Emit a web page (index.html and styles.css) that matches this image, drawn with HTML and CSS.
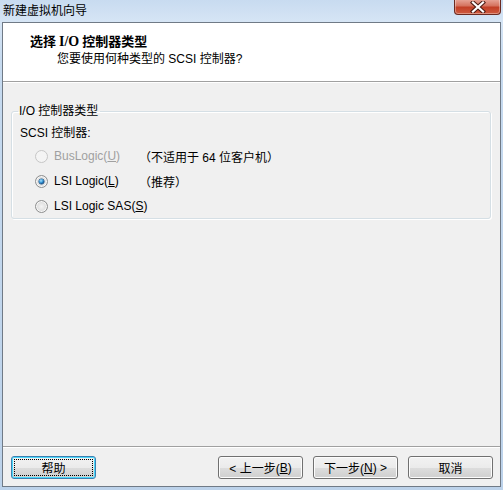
FILE: index.html
```html
<!DOCTYPE html>
<html>
<head>
<meta charset="utf-8">
<link rel="stylesheet" href="styles.css">
</head>
<body>
<div class="window">
  <div class="titlebar">
    <span class="title">新建虚拟机向导</span>
    <span class="close"><svg width="20" height="12" viewBox="0 0 20 12"><path d="M5 1.5 L15 10.5 M15 1.5 L5 10.5" stroke="#4a1a12" stroke-width="4.2" stroke-linecap="square"/><path d="M5 1.5 L15 10.5 M15 1.5 L5 10.5" stroke="#ffffff" stroke-width="2.2" stroke-linecap="square"/></svg></span>
  </div>
  <div class="client">
    <div class="header">
      <div class="h-title">选择 <span class="serif">I/O</span> 控制器类型</div>
      <div class="h-sub">您要使用何种类型的 SCSI 控制器?</div>
    </div>
    <div class="body">
      <fieldset class="group">
        <legend>I/O 控制器类型</legend>
        <div class="sub-label">SCSI 控制器:</div>
        <div class="row first disabled">
          <span class="radio"></span>
          <span class="label">BusLogic(<u>U</u>)</span>
          <span class="note">（不适用于 64 位客户机）</span>
        </div>
        <div class="row">
          <span class="radio checked"></span>
          <span class="label">LSI Logic(<u>L</u>)</span>
          <span class="note">（推荐）</span>
        </div>
        <div class="row">
          <span class="radio"></span>
          <span class="label">LSI Logic SAS(<u>S</u>)</span>
        </div>
      </fieldset>
    </div>
    <div class="footer">
      <button class="btn focused"><span class="focus">帮助</span></button>
      <div class="spacer"></div>
      <button class="btn">&lt; 上一步(<u>B</u>)</button>
      <button class="btn">下一步(<u>N</u>) &gt;</button>
      <button class="btn">取消</button>
    </div>
  </div>
</div>
</body>
</html>
```
FILE: styles.css
```css
* { box-sizing: border-box; }
html, body { margin: 0; padding: 0; }
body {
  font-family: "Liberation Sans", "Noto Sans CJK SC", sans-serif;
  font-size: 12px;
  color: #000;
  background: #c4d8ee;
}
.window {
  width: 503px;
  height: 490px;
  display: flex;
  flex-direction: column;
  background: linear-gradient(to bottom, #c8dbf0 0px, #d6e5f5 22px, #c6daef 60px, #bcd2ea 490px);
  overflow: hidden;
}
.titlebar {
  height: 22px;
  flex: none;
  display: flex;
  align-items: flex-start;
  justify-content: space-between;
  padding-left: 3px;
}
.title {
  line-height: 22px;
  font-size: 12px;
  color: #000;
}
.close {
  width: 47px;
  height: 16px;
  margin-right: 2px;
  margin-top: -1px;
  border: 1px solid #6b2a20;
  border-top: none;
  border-radius: 0 0 4px 4px;
  background: linear-gradient(to bottom, #e9a99c 0%, #d5735f 45%, #c23f26 55%, #cf5b3f 100%);
  box-shadow: inset 0 0 0 1px rgba(255,255,255,0.35);
  display: flex;
  align-items: center;
  justify-content: center;
}
.client {
  flex: 1;
  margin: 0 2px 3px 2px;
  border: 1px solid #707a86;
  background: #f0f0f0;
  display: flex;
  flex-direction: column;
}
.header {
  height: 59px;
  flex: none;
  background: #fff;
  border-bottom: 1px solid #a0a0a0;
  box-shadow: 0 1px 0 #ffffff;
  padding-top: 10px;
}
.h-title {
  font-weight: bold;
  font-size: 13px;
  padding-left: 27px;
  line-height: 15px;
  font-family: "Noto Sans CJK SC", sans-serif;
}
.h-title .serif { font-family: "Liberation Serif", serif; font-size: 14px; }
.h-sub {
  padding-left: 54px;
  margin-top: 3px;
  line-height: 15px;
}
.body {
  flex: 1;
  padding: 22px 8px 0 8px;
}
.group {
  margin: 0;
  width: 480px;
  height: 115px;
  border: 1px solid #d5dfe5;
  border-radius: 3px;
  box-shadow: inset 1px 1px 0 #fff, 1px 1px 0 #fff;
  padding: 6px 0 0 8px;
}
.group legend {
  padding: 0 2px 0 1px;
  margin-left: -2px;
  line-height: 14px;
}
.sub-label {
  line-height: 16px;
  margin-top: 1px;
}
.row {
  display: flex;
  align-items: center;
  height: 24px;
  padding-left: 15px;
  white-space: nowrap;
}
.row.first { margin-top: 3px; }
.row + .row { margin-top: 1px; }
.radio {
  width: 13px;
  height: 13px;
  border-radius: 50%;
  border: 1px solid #8e8f8f;
  background: radial-gradient(circle at 50% 50%, #f4f4f4 0, #dcdcdc 5px, #c8c8c8 6px);
  box-shadow: inset 0 0 0 1px #f8f8f8;
  position: relative;
  flex: none;
}
.radio.checked::after {
  content: "";
  position: absolute;
  left: 3px;
  top: 3px;
  width: 5px;
  height: 5px;
  border-radius: 50%;
  background: radial-gradient(circle at 40% 35%, #a9e2ff 0, #2c8fd0 2px, #0d4a86 3px);
  box-shadow: 0 0 0 0.5px #1b4f80;
}
.label {
  margin-left: 6px;
  min-width: 85px;
}
.disabled .label { color: #a0a0a0; }
.disabled .radio { border-color: #c6c6c6; background: #f4f4f4; box-shadow: none; }
.footer {
  height: 40px;
  flex: none;
  border-top: 1px solid #a0a0a0;
  box-shadow: inset 0 1px 0 #ffffff;
  display: flex;
  align-items: flex-start;
  padding: 9px 7px 0 8px;
  gap: 10px;
}
.spacer { flex: 1; }
.btn {
  width: 85px;
  height: 23px;
  font-family: "Liberation Sans", "Noto Sans CJK SC", sans-serif;
  font-size: 12px;
  color: #000;
  padding: 0;
  border: 1px solid #707070;
  border-radius: 3px;
  background: linear-gradient(to bottom, #f2f2f2 0%, #ebebeb 50%, #dddddd 51%, #cfcfcf 100%);
  box-shadow: inset 0 0 0 1px #fcfcfc;
  display: flex;
  align-items: center;
  justify-content: center;
}
.btn.focused {
  border-color: #3c7fb1;
  box-shadow: inset 0 0 0 1px #48d8fb;
  padding: 2px;
}
.btn .focus {
  width: 100%;
  height: 100%;
  border: 1px dotted #000;
  display: flex;
  align-items: center;
  justify-content: center;
}
u { text-decoration: underline; text-underline-offset: 1px; }
```
